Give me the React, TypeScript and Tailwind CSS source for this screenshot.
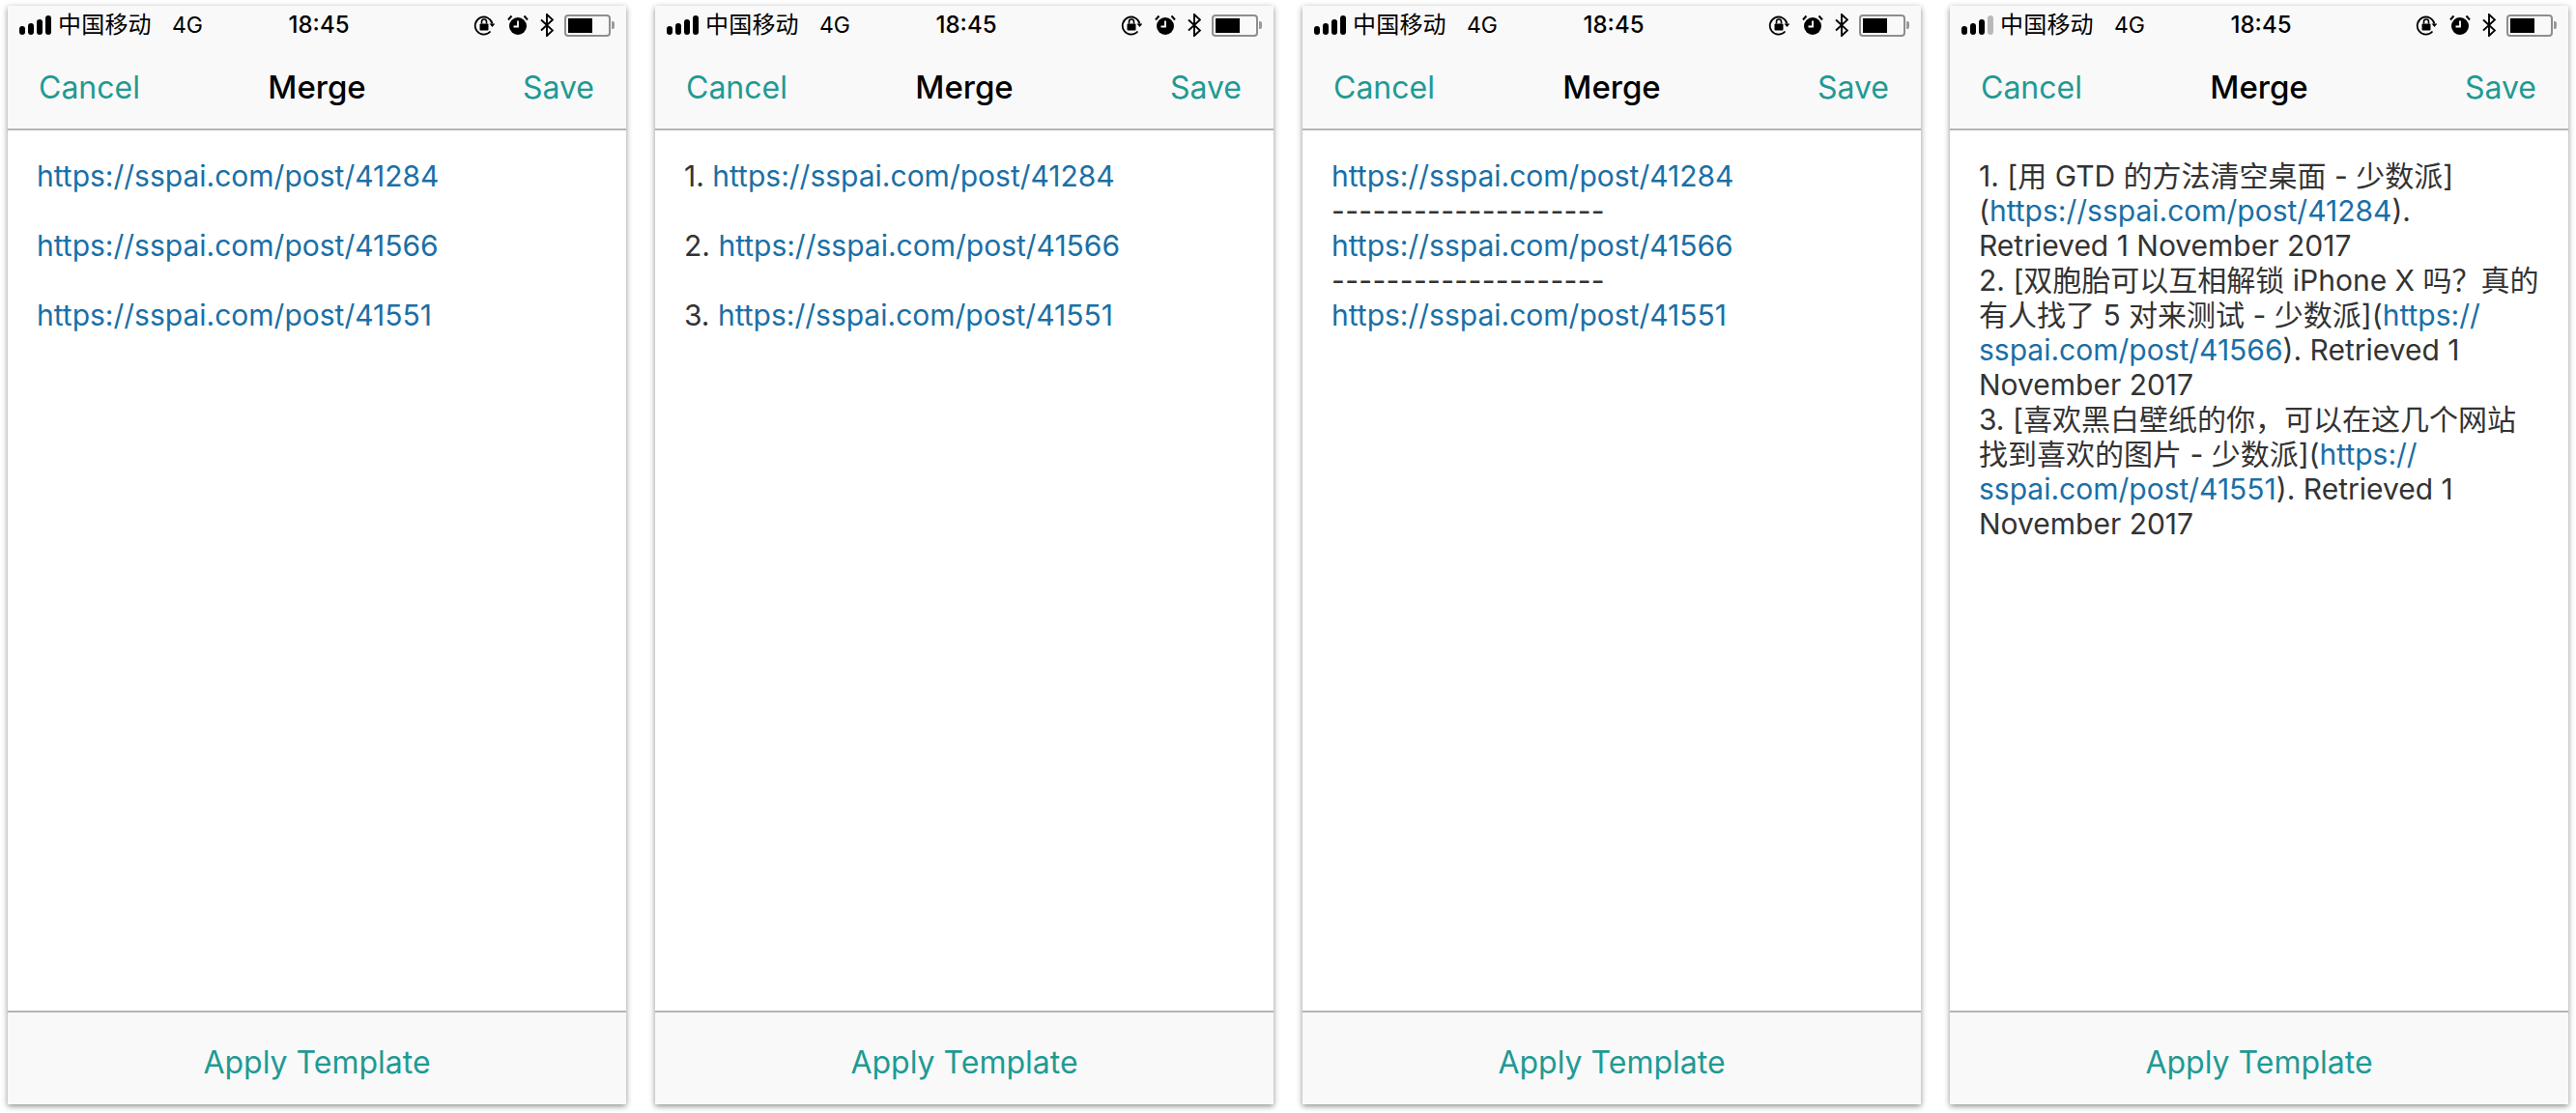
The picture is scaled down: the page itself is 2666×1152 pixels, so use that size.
import React from "react";

function Signal({ full }: { full: boolean }) {
  return (
    <svg width="34" height="20" viewBox="0 0 34 20" className="block">
      <rect x="0" y="11" width="6" height="9" rx="3" fill="#000" />
      <rect x="9" y="8" width="6" height="12" rx="3" fill="#000" />
      <rect x="18" y="4" width="6" height="16" rx="3" fill="#000" />
      <rect x="27" y="0" width="6" height="20" rx="3" fill={full ? "#000" : "#b9b9b9"} />
    </svg>
  );
}

function StatusIcons() {
  return (
    <div className="flex items-center">
      <svg width="22" height="22" viewBox="0 0 22 22" className="block">
        <path d="M19.5 9.5A9 9 0 1 0 17.5 17.5" fill="none" stroke="#000" strokeWidth="1.8" />
        <path d="M16.5 9.5h6l-3 3.6z" fill="#000" />
        <rect x="6.5" y="9.5" width="9" height="7" rx="1" fill="#000" />
        <path d="M8.5 9.5V7.5a2.5 2.5 0 0 1 5 0v2" fill="none" stroke="#000" strokeWidth="1.6" />
      </svg>
      <svg width="22" height="22" viewBox="0 0 22 22" className="block ml-[13px]">
        <circle cx="11" cy="12" r="9" fill="#000" />
        <path d="M11 6.5V12.5H6.5" fill="none" stroke="#fff" strokeWidth="1.8" />
        <path d="M1 5.5L4.5 1.5M21 5.5L17.5 1.5" stroke="#000" strokeWidth="2" />
      </svg>
      <svg width="14" height="24" viewBox="0 0 14 24" className="block ml-[12px]">
        <path d="M1 6.5L13 17.5L7 23V1L13 6.5L1 17.5" fill="none" stroke="#000" strokeWidth="1.9" />
      </svg>
      <div className="ml-[11px] flex items-center">
        <div className="w-[48px] h-[23px] rounded-[4px] border-2 border-[#8e8e8e] p-[2px]">
          <div className="w-[25px] h-full bg-black" />
        </div>
        <div className="ml-[1px] w-[3px] h-[8px] bg-[#9a9a9a] rounded-r-[2px]" />
      </div>
    </div>
  );
}

const L = ({ children }: { children: React.ReactNode }) => <span className="text-[#1a6fa6]">{children}</span>;
const Dashes = () => <div className="tracking-[0.35px]">--------------------</div>;

function Phone({ full = true, children }: { full?: boolean; children: React.ReactNode }) {
  return (
    <div className="w-[640px] h-[1137px] flex flex-col bg-white shadow-[0_2px_6px_rgba(0,0,0,0.45)] font-['Inter','Noto_Sans_CJK_SC',sans-serif]">
      <div className="h-[129px] shrink-0 bg-[#f9f9f9] border-b-2 border-[#b5b5b5] flex flex-col">
        <div className="h-[40px] pl-[12px] pr-[12px] flex items-center relative text-black whitespace-nowrap">
          <Signal full={full} />
          <span className="ml-[6px] text-[24px] leading-none w-[97px] tracking-[0.2px]">中国移动</span>
          <span className="ml-[21px] text-[23px] leading-none">4G</span>
          <span className="absolute left-[4px] right-0 text-center text-[24px] font-medium leading-none">18:45</span>
          <div className="ml-auto relative">
            <StatusIcons />
          </div>
        </div>
        <div className="flex-1 relative flex items-center justify-between pl-[32px] pr-[33px] pt-[2px] text-[32px] leading-none text-[#1f9a94]">
          <span>Cancel</span>
          <span className="absolute left-0 right-0 text-center text-black font-medium text-[33px]">Merge</span>
          <span>Save</span>
        </div>
      </div>
      <div className="flex-1 pt-[29px] pl-[30px] pr-[20px] text-[30px] leading-[36px] text-[#333333] whitespace-nowrap">
        {children}
      </div>
      <div className="h-[97px] shrink-0 bg-[#f9f9f9] border-t-2 border-[#b5b5b5] flex items-center justify-center pt-[9px] text-[32px] leading-none text-[#1f9a94]">
        Apply Template
      </div>
    </div>
  );
}

export default function App() {
  return (
    <div className="w-[2666px] h-[1152px] bg-white flex gap-[30px] pl-[8px] pt-[6px]">
      <Phone>
        <div><L>https://sspai.com/post/41284</L></div>
        <div className="h-[36px]" />
        <div><L>https://sspai.com/post/41566</L></div>
        <div className="h-[36px]" />
        <div><L>https://sspai.com/post/41551</L></div>
      </Phone>
      <Phone>
        <div>1. <L>https://sspai.com/post/41284</L></div>
        <div className="h-[36px]" />
        <div>2. <L>https://sspai.com/post/41566</L></div>
        <div className="h-[36px]" />
        <div>3. <L>https://sspai.com/post/41551</L></div>
      </Phone>
      <Phone>
        <div><L>https://sspai.com/post/41284</L></div>
        <Dashes />
        <div><L>https://sspai.com/post/41566</L></div>
        <Dashes />
        <div><L>https://sspai.com/post/41551</L></div>
      </Phone>
      <Phone full={false}>
        <div>1. [用 GTD 的方法清空桌面 - 少数派]</div>
        <div>(<L>https://sspai.com/post/41284</L>).</div>
        <div>Retrieved 1 November 2017</div>
        <div>2. [双胞胎可以互相解锁 iPhone X 吗？真的</div>
        <div>有人找了 5 对来测试 - 少数派](<L>https://</L></div>
        <div><L>sspai.com/post/41566</L>). Retrieved 1</div>
        <div>November 2017</div>
        <div>3. [喜欢黑白壁纸的你，可以在这几个网站</div>
        <div>找到喜欢的图片 - 少数派](<L>https://</L></div>
        <div><L>sspai.com/post/41551</L>). Retrieved 1</div>
        <div>November 2017</div>
      </Phone>
    </div>
  );
}
